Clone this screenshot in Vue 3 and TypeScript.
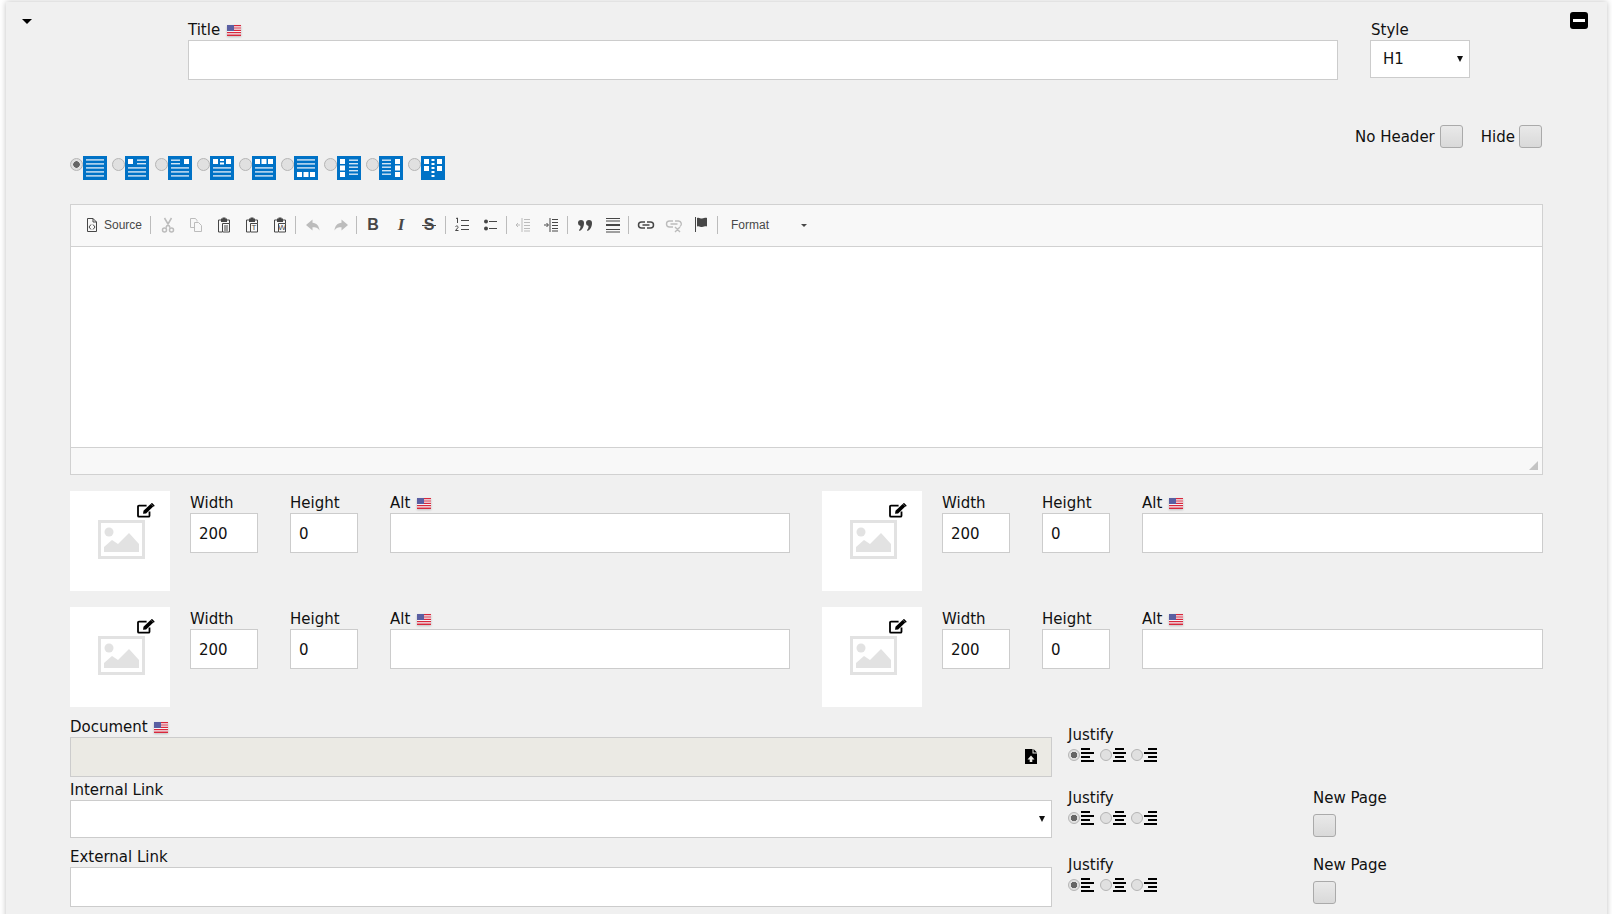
<template>
  <div class="panel">
    <span class="collapse-caret"></span>
    <span class="minus-btn"><i></i></span>

    <div class="head-row">
      <div class="field title-field">
        <label class="lbl">Title <svg class="flag" viewBox="0 0 14 11"><use href="#us-flag" /></svg></label>
        <input class="inp" type="text" />
      </div>
      <div class="field style-field">
        <label class="lbl lbl--style">Style</label>
        <div class="sel-wrap">
          <select class="inp sel sel--style"><option>H1</option></select>
        </div>
      </div>
    </div>

    <div class="toggle-row">
      <label class="toggle"><span class="toggle-text">No Header</span><input class="check" type="checkbox" /></label>
      <label class="toggle"><span class="toggle-text">Hide</span><input class="check" type="checkbox" /></label>
    </div>

    <div class="layout-row">
      <label v-for="(layout, i) in layouts" :key="i" class="layout-opt">
        <input class="radio" type="radio" name="layout" :checked="i === 0" />
        <svg class="layout-icon" viewBox="0 0 24 24">
          <rect width="24" height="24" fill="#0072c6" />
          <rect
            v-for="(r, j) in layout"
            :key="j"
            :x="r[0]"
            :y="r[1]"
            :width="r[2]"
            :height="r[3]"
            :fill="r[3] < 2 ? '#d5e7f5' : '#fff'"
          />
        </svg>
      </label>
    </div>

    <div class="editor">
      <div class="toolbar">
        <template v-for="(group, g) in toolbar" :key="g">
          <span v-if="g > 0" class="sep"></span>
          <span
            v-for="btn in group"
            :key="btn.id"
            class="tool"
            :class="{ 'tool--dim': btn.dim, 'tool--source': btn.id === 'source' }"
          >
            <span v-if="btn.glyph" class="glyph" :class="'glyph--' + btn.id">{{ btn.glyph }}</span>
            <svg v-else class="tool-icon" viewBox="0 0 16 16">
              <path v-if="btn.line" :d="btn.line" fill="none" stroke="currentColor" :stroke-width="btn.weight || 1" />
              <path v-if="btn.solid" :d="btn.solid" fill="currentColor" />
              <text v-if="btn.mark" x="10" y="13.400" class="tool-mark">{{ btn.mark }}</text>
            </svg>
            <span v-if="btn.id === 'source'" class="tool-text">Source</span>
          </span>
        </template>
        <span class="sep"></span>
        <span class="format">Format<i></i></span>
      </div>
      <div class="editor-body"></div>
      <div class="editor-foot"><i class="resize"></i></div>
    </div>

    <div class="image-grid">
      <div v-for="n in 4" :key="n" class="image-cell">
        <div class="thumb">
          <svg class="edit-icon" viewBox="0 0 18 15">
            <path d="M12.500 8.500v4.200a1 1 0 0 1-1 1H2a1 1 0 0 1-1-1V3.600a1 1 0 0 1 1-1h7.600" fill="none" stroke="#000" stroke-width="1.800" />
            <path d="M6 10.800l.5-3L13.600 .9l2.700 2.600-7.200 6.900z" fill="#000" />
            <path d="M14.300 .3l.8-.3 2.500 2.400-.3.800-.6.600-2.900-2.800z" fill="#000" />
          </svg>
          <svg class="placeholder" viewBox="0 0 47 39">
            <path d="M0 0h47v39H0zM3 3v33h41V3z" fill="#e2e2e2" fill-rule="evenodd" />
            <circle cx="11" cy="12" r="4.500" fill="#e2e2e2" />
            <path d="M6 32v-5l8-7 6 4 11-11 10 11v8z" fill="#e2e2e2" />
          </svg>
        </div>
        <div class="field size-field">
          <label class="lbl">Width</label>
          <input class="inp inp--size" type="text" value="200" />
        </div>
        <div class="field size-field">
          <label class="lbl">Height</label>
          <input class="inp inp--size" type="text" value="0" />
        </div>
        <div class="field alt-field">
          <label class="lbl">Alt <svg class="flag" viewBox="0 0 14 11"><use href="#us-flag" /></svg></label>
          <input class="inp inp--size" type="text" />
        </div>
      </div>
    </div>

    <div v-for="row in linkRows" :key="row.label" class="link-row" :class="'link-row--' + row.kind">
      <div class="field link-field">
        <label class="lbl">
          {{ row.label }}
          <svg v-if="row.kind === 'doc'" class="flag" viewBox="0 0 14 11"><use href="#us-flag" /></svg>
        </label>
        <div v-if="row.kind === 'doc'" class="inp doc-box">
          <svg class="upload" viewBox="0 0 12 15">
            <path d="M0 0h7.500v4.500H12V15H0zM6 6.500 2.500 10.500h2.200V13h2.600v-2.500h2.200z" fill="#000" fill-rule="evenodd" />
            <path d="M8.500 0 12 3.500H8.500z" fill="#000" />
          </svg>
        </div>
        <div v-else-if="row.kind === 'select'" class="sel-wrap">
          <select class="inp sel sel--link"></select>
        </div>
        <input v-else class="inp" type="text" />
      </div>
      <div class="justify-field">
        <div class="lbl">Justify</div>
        <div class="justify-opts">
          <label v-for="(lines, i) in justifyIcons" :key="i" class="justify-opt">
            <input class="radio" type="radio" :name="'justify-' + row.kind" :checked="i === 0" />
            <svg class="justify-icon" viewBox="0 0 13 14">
              <rect v-for="(l, j) in lines" :key="j" :x="l[0]" :y="j * 4" :width="l[1]" height="2" fill="#000" />
            </svg>
          </label>
        </div>
      </div>
      <div v-if="row.kind !== 'doc'" class="newpage-field">
        <div class="lbl">New Page</div>
        <input class="check check--page" type="checkbox" />
      </div>
    </div>

    <svg class="defs" width="0" height="0">
      <defs>
        <g id="us-flag">
          <rect width="14" height="11" fill="#f4f4f8" />
          <path d="M0 0h14v1.200H0zM0 2.400h14v1.100H0zM0 4.800h14v1.100H0zM0 7.100h14v1.100H0zM0 9.500h14V11H0z" fill="#d8283c" />
          <rect width="7" height="6" fill="#5a5fa2" />
        </g>
      </defs>
    </svg>
  </div>
</template>

<script setup lang="ts">
type Box = [number, number, number, number]

interface ToolBtn {
  id: string
  line?: string
  solid?: string
  mark?: string
  glyph?: string
  dim?: boolean
  weight?: number
}

const lines = (x: number, w: number, ys: number[]): Box[] => ys.map((y): Box => [x, y, w, 1.4])
const squares = (coords: number[][], size = 5): Box[] => coords.map((c): Box => [c[0], c[1], size, size])

const layouts: Box[][] = [
  lines(3, 18, [3.2, 7.200, 11.200, 15.200, 19.200]),
  [...squares([[3, 3]]), ...lines(12, 9, [3.500, 7]), ...lines(3, 18, [11.200, 15.200, 19.200])],
  [...squares([[16, 3]]), ...lines(3, 9, [3.500, 7]), ...lines(3, 18, [11.200, 15.200, 19.200])],
  [
    ...squares([[3, 3], [16, 3]]),
    ...squares([[10, 3], [10, 6.500]], 3).map((b): Box => [b[0], b[1], 4, 2]),
    ...lines(3, 18, [11.200, 15.200, 19.200]),
  ],
  [...squares([[3, 3], [9.500, 3], [16, 3]]), ...lines(3, 18, [11.200, 15.200, 19.200])],
  [...lines(3, 18, [3.200, 7.200, 11.200]), ...squares([[3, 16], [9.500, 16], [16, 16]])],
  [...squares([[3, 3], [3, 9.500], [3, 16]]), ...lines(12, 9, [3.500, 7, 10.500, 14, 17.500])],
  [...squares([[16, 3], [16, 9.500], [16, 16]]), ...lines(3, 9, [3.500, 7, 10.500, 14, 17.500])],
  [
    ...squares([[3, 3], [16, 3], [3, 10], [16, 10]]),
    ...[3, 7, 11, 15, 19].map((y): Box => [10.500, y, 3, 2]),
  ],
]

const clip = 'M5 3H2.500v12H6M11 3h2.500v3.500M6.500 6.500h7v8.500h-7z'
const clipTop = 'M5 3V1.500h1.500V.5h3v1H11V5H5z'

const toolbar: ToolBtn[][] = [
  [
    {
      id: 'source',
      line: 'M3.500 1.500h5.500l3.500 3.500v9.500h-9zM9 1.500V5h3.500M7 7.500 5 10l2 2.500M9 7.500l2 2.500-2 2.500',
    },
  ],
  [
    {
      id: 'cut',
      dim: true,
      weight: 1.500,
      line: 'M4.500 1 10 10.500M11.500 1 6 10.500M6.500 13a2 2 0 1 1-4 0 2 2 0 1 1 4 0zM13.500 13a2 2 0 1 1-4 0 2 2 0 1 1 4 0z',
    },
    { id: 'copy', dim: true, line: 'M2.500 1.500h5l1.500 2v1M6.500 5.500h4l3 3v6h-7zM2.500 1.500v9h4' },
    { id: 'paste', line: clip + 'M8 9h4M8 11h4M8 13h4', solid: clipTop },
    { id: 'paste-text', line: clip, solid: clipTop, mark: 'T' },
    { id: 'paste-word', line: clip, solid: clipTop, mark: 'W' },
  ],
  [
    { id: 'undo', dim: true, solid: 'M7.500 2.500 1 8l6.500 5.500v-3.300c3 0 5.500.5 7 3.300-.3-4.500-3-7.500-7-7.700z' },
    { id: 'redo', dim: true, solid: 'M8.500 2.500 15 8l-6.500 5.500v-3.300c-3 0-5.500.5-7 3.300.3-4.500 3-7.500 7-7.700z' },
  ],
  [
    { id: 'bold', glyph: 'B' },
    { id: 'italic', glyph: 'I' },
    { id: 'strike', glyph: 'S' },
  ],
  [
    { id: 'ol', line: 'M6 3.500h8M6 8.500h8M6 12.500h8M1 1.500l1.500-.5V6M.5 9.500c1-1 3-.5 2.500 1L.5 13.500H3.500' },
    {
      id: 'ul',
      line: 'M6 4.500h8M6 11.500h8',
      solid: 'M1 4.500a2 2 0 1 1 4 0 2 2 0 1 1-4 0zM1 11.500a2 2 0 1 1 4 0 2 2 0 1 1-4 0z',
    },
  ],
  [
    {
      id: 'outdent',
      dim: true,
      line: 'M8 2.500h6M8 5.500h6M8 8.500h6M8 11.500h6M8 14h6M6 1v14M4 8H0M2 6 0 8l2 2',
    },
    {
      id: 'indent',
      line: 'M8 2.500h6M8 5.500h6M8 8.500h6M8 11.500h6M8 14h6M6 1v14M0 8h4M2.500 6l2 2-2 2',
    },
  ],
  [
    {
      id: 'quote',
      solid:
        'M1 6a3 3 0 1 1 6 0c0 4-2 7-4.500 8L2 13c1-1 1.500-2 1.500-4A3 3 0 0 1 1 6zM9 6a3 3 0 1 1 6 0c0 4-2 7-4.500 8L10 13c1-1 1.500-2 1.500-4A3 3 0 0 1 9 6z',
    },
    {
      id: 'hr',
      line: 'M1 1.500h14M1 4h14M1 12.500h14M1 15h14',
      solid: 'M1 7h14v2H1z',
    },
  ],
  [
    {
      id: 'link',
      weight: 1.500,
      line: 'M7 5H3.500a3 3 0 0 0 0 6H7M9 5h3.500a3 3 0 0 1 0 6H9M4.500 8h7',
    },
    {
      id: 'unlink',
      dim: true,
      weight: 1.400,
      line: 'M7 4H3.500a3 3 0 0 0 0 6H7M9 4h3.500a3 3 0 0 1 1.500 5.500M4.500 7h7M9 10l5 5M14 10l-5 5',
    },
    { id: 'flag', line: 'M1.500 0v15', solid: 'M3 1c2-1 3 .5 5 .5s3-1 5-.5v8.500c-2-.5-3 .5-5 .5s-3-1.500-5-.5z' },
  ],
]

const justifyIcons: [number, number][][] = [
  [[0, 9], [0, 13], [0, 9], [0, 13]],
  [[2, 9], [0, 13], [2, 9], [0, 13]],
  [[4, 9], [0, 13], [4, 9], [0, 13]],
]

const linkRows = [
  { label: 'Document', kind: 'doc' },
  { label: 'Internal Link', kind: 'select' },
  { label: 'External Link', kind: 'text' },
]
</script>

<style>
html,
body {
  background: #fff;
  overflow: hidden;
}
</style>

<style scoped>
.panel {
  position: relative;
  box-sizing: border-box;
  width: 1601px;
  height: 930px;
  margin: 2px 0 0 6px;
  padding: 18px 64px 0;
  background: #f0f0f0;
  box-shadow: 0 0 6px rgba(0, 0, 0, 0.25);
  font-family: 'DejaVu Sans', Verdana, sans-serif;
  font-size: 15px;
  color: #111;
}

.collapse-caret {
  position: absolute;
  left: 16px;
  top: 17px;
  border-left: 5px solid transparent;
  border-right: 5px solid transparent;
  border-top: 5px solid #000;
}

.minus-btn {
  position: absolute;
  left: 1564px;
  top: 10px;
  width: 18px;
  height: 17px;
  border-radius: 3px;
  background: #000;
  display: flex;
  align-items: center;
  justify-content: center;
}

.minus-btn i {
  width: 12px;
  height: 3px;
  background: #fff;
}

.lbl {
  display: block;
  height: 20px;
  line-height: 20px;
  white-space: nowrap;
}

.lbl--style {
  padding-left: 1px;
}

.flag {
  width: 14px;
  height: 11px;
  margin-left: 2px;
  vertical-align: -1px;
  filter: drop-shadow(0 1px 1px rgba(0, 0, 0, 0.2));
}

.defs {
  position: absolute;
}

.inp {
  display: block;
  box-sizing: border-box;
  width: 100%;
  height: 40px;
  margin: 0;
  border: 1px solid #ccc;
  border-radius: 0;
  background: #fff;
  padding: 0 9px;
  font-family: inherit;
  font-size: 15px;
  color: #111;
  outline: none;
}

.head-row {
  display: flex;
  padding-left: 118px;
}

.title-field {
  width: 1150px;
}

.style-field {
  width: 100px;
  margin-left: 32px;
}

.sel-wrap {
  position: relative;
}

.sel-wrap::after {
  content: '';
  position: absolute;
  right: 7px;
  top: 16px;
  border-left: 3px solid transparent;
  border-right: 3px solid transparent;
  border-top: 6px solid #111;
  pointer-events: none;
}

.sel {
  appearance: none;
  height: 38px;
}

.sel--style {
  padding-left: 12px;
}

.toggle-row {
  display: flex;
  justify-content: flex-end;
  gap: 18px;
  margin-top: 44px;
  height: 24px;
  padding-right: 1px;
}

.toggle {
  display: flex;
  align-items: center;
  gap: 5px;
}

.toggle + .toggle {
  gap: 4px;
}

.toggle-text {
  padding-top: 2px;
}

.check {
  appearance: none;
  display: block;
  width: 23px;
  height: 23px;
  margin: 0;
  border: 1px solid #aaa;
  border-radius: 3px;
  background: linear-gradient(#e9e9e9, #d9d9d9);
}

.layout-row {
  display: flex;
  margin-top: 8px;
  height: 24px;
}

.layout-row .radio {
  margin-top: 2px;
  width: 13px;
  height: 13px;
  margin-right: 0;
}

.layout-opt {
  display: flex;
  width: 42.250px;
}

.radio {
  appearance: none;
  display: block;
  box-sizing: border-box;
  flex: none;
  width: 12px;
  height: 12px;
  margin: 1px 1px 0 0;
  border: 1px solid #b5b5b5;
  border-radius: 50%;
  background: #e0e0e0;
}

.radio:checked {
  background: radial-gradient(circle, #666 0 3px, #e0e0e0 3.500px);
}

.layout-icon {
  display: block;
  width: 24px;
  height: 24px;
}

.editor {
  margin-top: 24px;
  border: 1px solid #d1d1d1;
  height: 271px;
  box-sizing: border-box;
  display: flex;
  flex-direction: column;
}

.toolbar {
  display: flex;
  align-items: center;
  height: 42px;
  flex: none;
  padding: 0 0 1px 7px;
  background: #f8f8f8;
  border-bottom: 1px solid #d1d1d1;
  box-sizing: border-box;
  font-family: 'Liberation Sans', Arial, sans-serif;
}

.sep {
  width: 1px;
  height: 18px;
  margin: 0 3px 0 1px;
  background: #bcbcbc;
}

.tool {
  display: flex;
  align-items: center;
  justify-content: center;
  width: 28px;
  height: 28px;
  color: #474747;
}

.tool--source {
  width: auto;
  padding: 0 7px 0 6px;
}

.tool--dim {
  color: #bcbcbc;
}

.tool-icon {
  width: 16px;
  height: 16px;
  overflow: visible;
}

.tool-mark {
  font-family: 'Liberation Sans', Arial, sans-serif;
  font-size: 8px;
  fill: currentColor;
  text-anchor: middle;
}

.tool-text {
  margin-left: 4px;
  font-size: 12px;
  color: #484848;
}

.glyph {
  position: relative;
  left: -1px;
  font-family: 'Liberation Sans', Arial, sans-serif;
  font-weight: 700;
  font-size: 16px;
  line-height: 16px;
}

.glyph--italic {
  font-family: 'Liberation Serif', serif;
  font-style: italic;
  font-size: 17px;
}

.glyph--strike::after {
  content: '';
  position: absolute;
  left: -2px;
  right: -2px;
  top: 8px;
  height: 1px;
  background: currentColor;
}

.format {
  position: relative;
  width: 80px;
  padding-left: 10px;
  font-size: 12px;
  color: #484848;
}

.format i {
  position: absolute;
  left: 80px;
  top: 6px;
  border-left: 3px solid transparent;
  border-right: 3px solid transparent;
  border-top: 3px solid #484848;
}

.editor-body {
  flex: 1;
  background: #fff;
}

.editor-foot {
  position: relative;
  flex: none;
  height: 27px;
  background: #f8f8f8;
  border-top: 1px solid #d1d1d1;
  box-sizing: border-box;
}

.resize {
  position: absolute;
  right: 4px;
  bottom: 4px;
  width: 0;
  height: 0;
  border-left: 9px solid transparent;
  border-bottom: 9px solid #c4c4c4;
}

.image-grid {
  display: grid;
  grid-template-columns: 720px 721px;
  column-gap: 32px;
  row-gap: 16px;
  margin-top: 16px;
}

.image-cell {
  display: flex;
  gap: 32px;
  height: 100px;
}

.thumb {
  position: relative;
  flex: none;
  width: 100px;
  height: 100px;
  margin-right: -12px;
  background: #fff;
  box-sizing: border-box;
  padding: 29px 0 0 28px;
}

.edit-icon {
  position: absolute;
  left: 67px;
  top: 12px;
  width: 18px;
  height: 15px;
}

.placeholder {
  display: block;
  width: 47px;
  height: 39px;
}

.size-field {
  flex: none;
  width: 68px;
  padding-top: 2px;
}

.alt-field {
  flex: 1;
  padding-top: 2px;
}

.inp--size {
  padding: 2px 0 0 8px;
}

.link-row {
  display: flex;
}

.link-row--doc {
  margin-top: 10px;
  height: 60px;
}

.link-row--select {
  margin-top: 3px;
}

.link-row--text {
  margin-top: 9px;
}

.link-field {
  flex: none;
  width: 982px;
}

.doc-box {
  position: relative;
  background: #ebeae4;
}

.upload {
  position: absolute;
  right: 14px;
  top: 11px;
  width: 12px;
  height: 15px;
}

.sel--link {
  height: 38px;
}

.justify-field {
  flex: none;
  width: 245px;
  margin-left: 16px;
  padding-top: 8px;
}

.justify-opts {
  display: flex;
  margin-top: 3px;
}

.justify-opt {
  display: flex;
  width: 31.500px;
}

.justify-icon {
  display: block;
  width: 13px;
  height: 14px;
}

.newpage-field {
  padding-top: 8px;
}

.check--page {
  margin-top: 6px;
}
</style>
